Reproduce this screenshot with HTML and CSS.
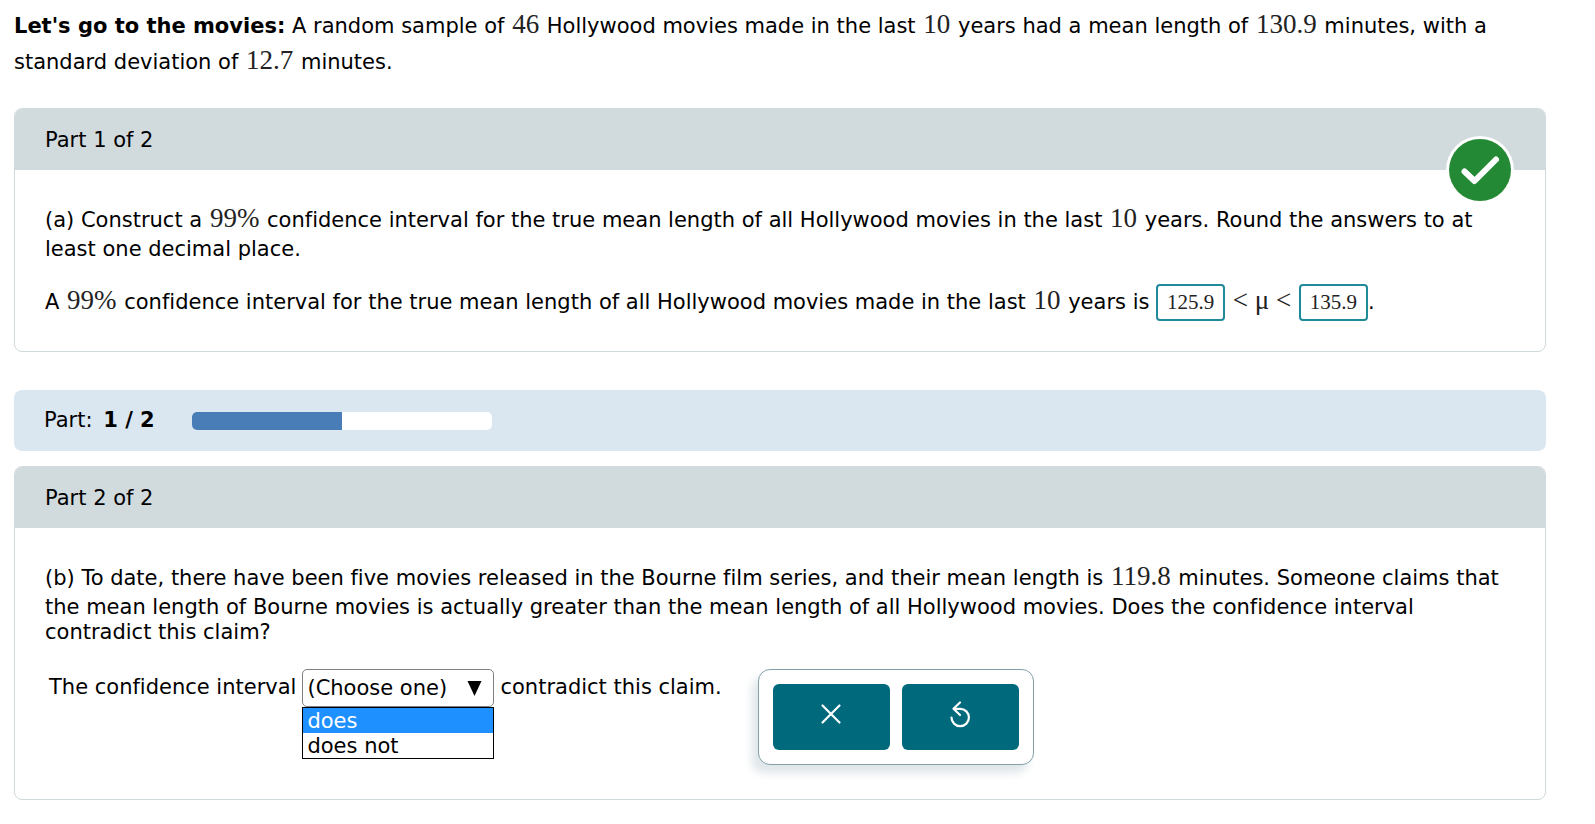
FILE: index.html
```html
<!DOCTYPE html>
<html lang="en">
  <head>
    <meta charset="UTF-8" />
    <meta name="viewport" content="width=device-width, initial-scale=1.0" />
    <title>Confidence Intervals</title>
    <link rel="stylesheet" href="styles.css">
  </head>
  <body>
    <main class="page">
      <p class="intro">
        <strong>Let's go to the movies:</strong> A random sample of
        <span class="math">46</span> Hollywood movies made in the last
        <span class="math">10</span> years had a mean length of
        <span class="math">130.9</span> minutes, with a standard deviation of
        <span class="math">12.7</span> minutes.
      </p>

      <section class="part">
        <h2 class="part-header">Part 1 of 2</h2>
        <svg class="part-badge" viewBox="0 0 68 68" role="img" aria-label="Correct">
          <circle cx="34" cy="34" r="34" fill="#fff" />
          <circle cx="34" cy="34" r="31" fill="#248934" />
          <path d="M18.500 35.500L28.500 45L50 23.500" fill="none" stroke="#fff" stroke-width="6" stroke-linecap="round" stroke-linejoin="round" />
        </svg>
        <div class="part-body">
          <p class="question">
            (a) Construct a <span class="math">99%</span> confidence interval for
            the true mean length of all Hollywood movies in the last
            <span class="math">10</span> years. Round the answers to at least one
            decimal place.
          </p>
          <p class="answer-line">
            A <span class="math">99%</span> confidence interval for the true mean
            length of all Hollywood movies made in the last
            <span class="math">10</span> years is
            <input class="answer" type="text" value="125.9" aria-label="Lower limit" />
            <span class="math">&lt; μ &lt;</span>
            <input class="answer" type="text" value="135.9" aria-label="Upper limit" /><span>.</span>
          </p>
        </div>
      </section>

      <div class="progress">
        <span>Part: <strong class="progress-count">1 / 2</strong></span>
        <div class="progress-track">
          <div class="progress-fill" style="width: 50%"></div>
        </div>
      </div>

      <section class="part">
        <h2 class="part-header">Part 2 of 2</h2>
        <div class="part-body">
          <p class="question">
            (b) To date, there have been five movies released in the Bourne film
            series, and their mean length is <span class="math">119.8</span>
            minutes. Someone claims that the mean length of Bourne movies is
            actually greater than the mean length of all Hollywood movies. Does
            the confidence interval contradict this claim?
          </p>
          <div class="choice-row">
            <label class="choice-text" for="choice">The confidence interval</label>
            <div class="choice">
              <select id="choice" class="choice-select">
                <option>(Choose one)</option>
                <option>does</option>
                <option>does not</option>
              </select>
              <svg class="choice-arrow" viewBox="0 0 14 15" aria-hidden="true">
                <path d="M0 0H14L7 15Z" />
              </svg>
              <ul class="choice-menu">
                <li class="choice-item active">does</li>
                <li class="choice-item">does not</li>
              </ul>
            </div>
            <span class="choice-text">contradict this claim.</span>
            <div class="tools">
              <button type="button" class="tool" aria-label="Clear">
                <svg class="tool-icon" viewBox="0 0 28 28">
                  <path d="M5.500 5.500L22.500 22.500M22.500 5.500L5.500 22.500" />
                </svg>
              </button>
              <button type="button" class="tool" aria-label="Undo">
                <svg class="tool-icon" viewBox="0 0 28 28">
                  <path d="M5.500 17.500A8.700 8.700 0 1 0 14.200 8.800H7.500M14 2.500L7.500 8.800L14 15" />
                </svg>
              </button>
            </div>
          </div>
        </div>
      </section>
    </main>
  </body>
</html>
```
FILE: styles.css
```css
:root {
  --header-bg: #d1dadd;
  --border: #d1dadd;
  --progress-bg: #dae6f0;
  --progress-fill: #487db7;
  --teal: #006a7c;
  --radius: 8px;
  --math: "Liberation Serif", "Times New Roman", serif;
}

* {
  margin: 0;
  padding: 0;
  box-sizing: border-box;
}

body {
  font-family: "DejaVu Sans", Verdana, sans-serif;
  font-size: 21px;
  font-variant-ligatures: none;
  line-height: 25px;
  color: #000;
  background: #fff;
}

.page {
  padding: 8px 49px 24px 14px;
}

.intro {
  line-height: 36px;
  margin-bottom: 28px;
}

.math {
  margin: 0 1px;
  font-family: var(--math);
  font-size: 27px;
  line-height: 1;
  color: #222;
}

.part {
  position: relative;
  border: 1px solid var(--border);
  border-radius: var(--radius);
  margin-bottom: 38px;
}

.part-header {
  padding: 19px 30px 17px;
  font-size: 21px;
  font-weight: normal;
  background: var(--header-bg);
  border-radius: 7px 7px 0 0;
}

.part-badge {
  position: absolute;
  top: 27px;
  right: 31px;
  width: 68px;
  height: 68px;
}

.part-body {
  padding: 29px 30px 30px;
}

.question {
  margin-bottom: 22px;
}

.question .math {
  line-height: 38px;
}

.answer {
  width: 69px;
  height: 37px;
  border: 2px solid #1f8a9a;
  border-radius: 4px;
  font-family: var(--math);
  font-size: 21px;
  text-align: center;
  color: #222;
}

.progress {
  display: flex;
  align-items: center;
  gap: 37px;
  padding: 18px 30px;
  margin-bottom: 15px;
  background: var(--progress-bg);
  border-radius: var(--radius);
}

.progress-count {
  margin-left: 4px;
}

.progress-track {
  width: 300px;
  height: 18px;
  background: #fff;
  border-radius: 5px;
  overflow: hidden;
}

.progress-fill {
  height: 100%;
  background: var(--progress-fill);
}

.choice-row {
  display: flex;
  align-items: flex-start;
  gap: 6px;
  padding: 2px 0 4px 4px;
}

.choice-text {
  padding-top: 6px;
}

.choice {
  position: relative;
  width: 192px;
}

.choice-select {
  display: block;
  width: 100%;
  height: 38px;
  padding: 0 4px;
  appearance: none;
  border: 1px solid #808080;
  border-radius: 5px;
  background: #fff;
  font: inherit;
  color: #000;
}

.choice-arrow {
  position: absolute;
  top: 12px;
  right: 12px;
  width: 15px;
  height: 15px;
  pointer-events: none;
}

.choice-menu {
  position: absolute;
  top: 38px;
  left: 0;
  width: 100%;
  border: 1px solid #000;
  background: #fff;
  list-style: none;
}

.choice-item {
  padding: 1px 4px 0;
  line-height: 24px;
}

.choice-item.active {
  background: #1e90ff;
  color: #fff;
}

.tools {
  display: flex;
  gap: 12px;
  margin-left: 30px;
  padding: 14px;
  border: 1px solid #83a0a8;
  border-radius: 12px;
  background: #fff;
  box-shadow: -6px 8px 10px #dfe6e9;
}

.tool {
  display: flex;
  justify-content: center;
  width: 117px;
  height: 66px;
  padding-top: 16px;
  border: none;
  border-radius: 6px;
  background: var(--teal);
  cursor: pointer;
}

.tool-icon {
  width: 28px;
  height: 28px;
  fill: none;
  stroke: #fff;
  stroke-width: 2.2;
  stroke-linecap: round;
  stroke-linejoin: round;
}
```
